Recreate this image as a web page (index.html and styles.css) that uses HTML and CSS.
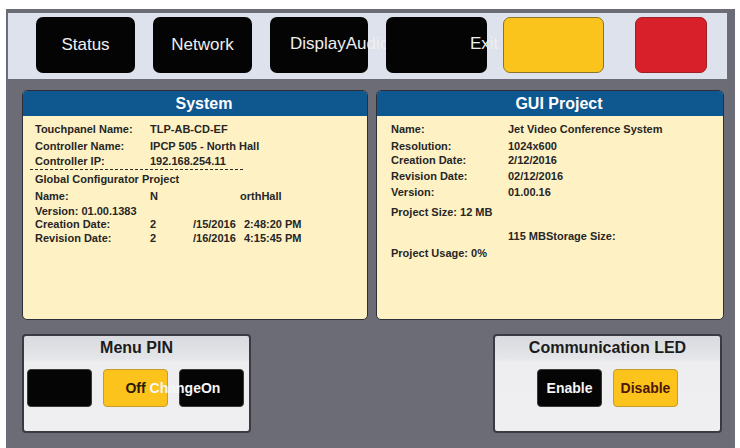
FILE: index.html
```html
<!DOCTYPE html>
<html>
<head>
<meta charset="utf-8">
<link rel="stylesheet" href="styles.css">
</head>
<body>
<div class="frame">
  <div class="topbar">
    <div class="tbtn dark">Status</div>
    <div class="tbtn dark gap18">Network</div>
    <div class="tbtn dark gap18 left20">DisplayAudio</div>
    <div class="tbtn dark gap18 exit">Exit</div>
    <div class="tbtn yellow gap16"></div>
    <div class="tbtn red gap31"></div>
  </div>

  <div class="panels">
    <section class="panel sys">
      <h2 class="phead">System</h2>
      <div class="pbody">
        <div class="row"><span class="lab">Touchpanel Name:</span><span>TLP-AB-CD-EF</span></div>
        <div class="row m4"><span class="lab">Controller Name:</span><span>IPCP 505 - North Hall</span></div>
        <div class="row m2"><span class="lab">Controller IP:</span><span>192.168.254.11</span></div>
        <div class="dash"></div>
        <div class="row m3">Global Configurator Project</div>
        <div class="row m4"><span class="lab">Name:</span><span class="n1">N</span><span>orthHall</span></div>
        <div class="row m2">Version: 01.00.1383</div>
        <div class="row"><span class="lab">Creation Date:</span><span class="c1">2</span><span class="c2">/15/2016</span><span>2:48:20 PM</span></div>
        <div class="row m1"><span class="lab">Revision Date:</span><span class="c1">2</span><span class="c2">/16/2016</span><span>4:15:45 PM</span></div>
      </div>
    </section>
    <section class="panel gui">
      <h2 class="phead">GUI Project</h2>
      <div class="pbody">
        <div class="row"><span class="lab">Name:</span><span>Jet Video Conference System</span></div>
        <div class="row m4"><span class="lab">Resolution:</span><span>1024x600</span></div>
        <div class="row m1"><span class="lab">Creation Date:</span><span>2/12/2016</span></div>
        <div class="row m3"><span class="lab">Revision Date:</span><span>02/12/2016</span></div>
        <div class="row m3"><span class="lab">Version:</span><span>01.00.16</span></div>
        <div class="row m7">Project Size: 12 MB</div>
        <div class="row m11"><span class="lab"></span><span>115 MBStorage Size:</span></div>
        <div class="row m4">Project Usage: 0%</div>
      </div>
    </section>
  </div>

  <div class="bottom">
    <section class="box">
      <h3 class="btitle">Menu PIN</h3>
      <div class="brow">
        <div class="sbtn dark"></div>
        <div class="sbtn yellow"><span class="off">Off<span class="change">ChangeOn</span></span></div>
        <div class="sbtn dark"></div>
      </div>
    </section>
    <section class="box">
      <h3 class="btitle">Communication LED</h3>
      <div class="brow center">
        <div class="sbtn dark light">Enable</div>
        <div class="sbtn yellow maroon">Disable</div>
      </div>
    </section>
  </div>
</div>
</body>
</html>
```

FILE: styles.css
```css
* { box-sizing: border-box; }
html, body { margin: 0; padding: 0; background: #ffffff; }
body { font-family: "Liberation Sans", Arial, sans-serif; }

.frame {
  margin: 9px 0 0 6px;
  width: 729px;
  height: 439px;
  padding-top: 4px;
  background: #6c6c76;
  border-top: 0;
  overflow: hidden;
}

.topbar {
  margin: 0 8px 0 2px;
  height: 66px;
  background: #dde2ec;
  display: flex;
  align-items: flex-start;
  padding: 4px 0 0 28px;
}

.tbtn {
  height: 56px;
  width: 99px;
  border-radius: 7px;
  display: flex;
  align-items: center;
  justify-content: center;
  font-size: 17px;
  color: #efefef;
  white-space: nowrap;
  flex: none;
}
.tbtn.dark { background: #040404; }
.gap18 { margin-left: 18px; }
.gap16 { margin-left: 16px; }
.gap31 { margin-left: 31px; }
.tbtn.left20 { width: 98px; justify-content: flex-start; padding-left: 20px; padding-bottom: 2px; }
.tbtn.exit { width: 101px; justify-content: flex-start; padding-left: 84px; padding-bottom: 2px; }
.tbtn.yellow { width: 101px; background: #fbc41c; border: 1px solid #8c7426; }
.tbtn.red { width: 72px; background: #d8202a; border: 1px solid #9e2026; }

.panels {
  display: flex;
  gap: 8px;
  margin-top: 11px;
  padding-left: 16px;
}
.panel {
  height: 230px;
  border: 1px solid #2c2f38;
  border-radius: 5px;
  background: #fef2c4;
  overflow: hidden;
  display: flex;
  flex-direction: column;
}
.panel.sys { width: 346px; }
.panel.gui { width: 348px; }
.phead {
  margin: 0;
  height: 25px;
  line-height: 25px;
  background: #0f578f;
  color: #ffffff;
  font-size: 16px;
  font-weight: bold;
  text-align: center;
  padding-left: 18px;
}
.pbody {
  padding: 7px 0 0 12px;
  font-size: 11px;
  font-weight: bold;
  color: #262626;
}
.gui .pbody { padding-left: 14px; }
.row {
  display: flex;
  height: 13px;
  line-height: 13px;
  white-space: nowrap;
}
.lab { width: 115px; flex: none; }
.gui .lab { width: 117px; }
.m1 { margin-top: 1px; }
.m2 { margin-top: 2px; }
.m3 { margin-top: 3px; }
.m4 { margin-top: 4px; }
.m7 { margin-top: 7px; }
.m11 { margin-top: 11px; }
.n1 { width: 90px; }
.c1 { width: 43px; }
.c2 { width: 51px; }
.dash {
  margin: 1px 0 0 -5px;
  width: 213px;
  border-top: 1px dashed #2a2a2a;
}

.bottom {
  display: flex;
  justify-content: space-between;
  margin-top: 14px;
  padding: 0 13px 0 16px;
}
.box {
  width: 229px;
  height: 99px;
  border: 2px solid #3a3b42;
  border-radius: 4px;
  background: linear-gradient(#d9dadf 0px, #e4e5e9 22px, #eeeef1 26px, #efeff2 100%);
  padding: 0 3px;
}
.btitle {
  margin: 0;
  height: 24px;
  line-height: 24px;
  text-align: center;
  font-size: 16px;
  font-weight: bold;
  color: #1b1b1b;
}
.brow {
  display: flex;
  gap: 11px;
  margin-top: 9px;
}
.brow.center { justify-content: center; }
.sbtn {
  width: 65px;
  height: 38px;
  border-radius: 4px;
  display: flex;
  align-items: center;
  justify-content: center;
  font-size: 14px;
  font-weight: bold;
  white-space: nowrap;
}
.sbtn.dark { background: #050505; border: 1px solid #3a3a3a; }
.sbtn.yellow { background: #fbc31c; border: 1px solid #c69c2a; color: #2a1a02; }
.sbtn.light { color: #f4f4f4; }
.sbtn.maroon { color: #4c1708; }
.off { position: relative; }
.change {
  position: absolute;
  left: calc(100% + 4px);
  top: 0;
  color: #f6f6f6;
  z-index: 2;
}
```
